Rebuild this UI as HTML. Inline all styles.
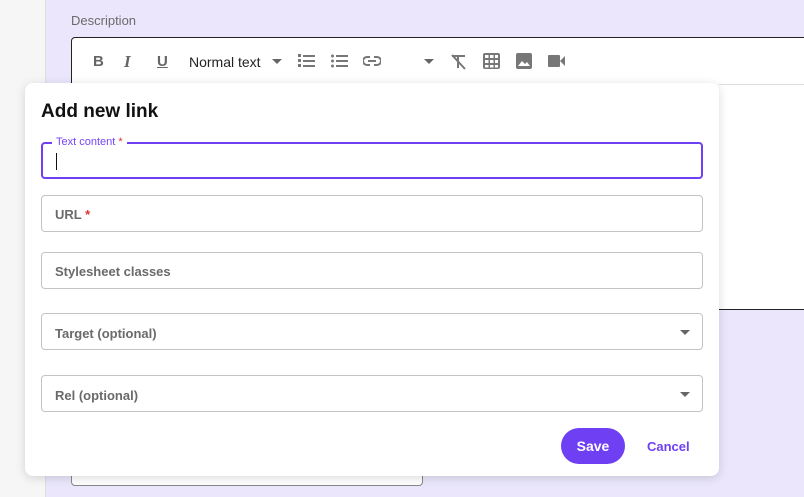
<!DOCTYPE html>
<html><head><style>
*{box-sizing:border-box;margin:0;padding:0}
body{width:804px;height:497px;overflow:hidden;position:relative;background:#ebe6fc;font-family:"Liberation Sans",sans-serif}
.left{position:absolute;left:0;top:0;width:46px;height:497px;background:#f6f6f6;border-right:1px solid #ddd}
.abs{position:absolute}
.editor{left:71px;top:37px;width:760px;height:273px;background:#fff;border:1px solid #222;border-radius:4px}
.tb{position:absolute;top:52px;height:18px;color:#666;font-size:15px;font-weight:bold}
.dialog{left:25px;top:83px;width:694px;height:393px;background:#fff;border-radius:8px;box-shadow:0 2px 10px rgba(0,0,0,.15)}
.f{position:absolute;left:41px;width:662px;height:37px;border:1px solid #c4c4c4;border-radius:4px;color:#6a6a6a;font-size:13px;font-weight:bold;padding:11px 13px}
.caret{position:absolute;right:12px;top:16px;border-left:5px solid transparent;border-right:5px solid transparent;border-top:5px solid #666}
</style></head><body>
<div class="left"></div>
<div class="abs" style="left:71px;top:13px;font-size:13px;color:#6b6b6b">Description</div>
<div class="abs editor"></div>
<div class="abs" style="left:71px;top:440px;width:352px;height:46px;background:#fff;border:1px solid #888;border-radius:4px"></div>
<div class="tb" style="left:93px;top:53px">B</div>
<div class="tb" style="left:124px;font-style:italic;font-family:'Liberation Serif',serif;font-size:17px">I</div>
<div class="tb" style="left:157px;text-decoration:underline;top:53px">U</div>
<div class="tb" style="left:189px;font-weight:normal;font-size:14px;color:#222;top:54px">Normal text</div>
<div class="abs" style="left:272px;top:59px;border-left:5px solid transparent;border-right:5px solid transparent;border-top:5px solid #666"></div>
<svg class="abs" style="left:298px;top:53px" width="18" height="16" fill="#777"><rect x="5" y="2" width="12" height="2"/><rect x="5" y="7" width="12" height="2"/><rect x="5" y="12" width="12" height="2"/><rect x="0" y="1" width="3" height="3"/><rect x="0" y="6" width="3" height="3"/><rect x="0" y="11" width="3" height="3"/></svg>
<svg class="abs" style="left:331px;top:53px" width="18" height="16" fill="#777"><rect x="5" y="2" width="12" height="2"/><rect x="5" y="7" width="12" height="2"/><rect x="5" y="12" width="12" height="2"/><circle cx="1.5" cy="3" r="1.5"/><circle cx="1.5" cy="8" r="1.5"/><circle cx="1.5" cy="13" r="1.5"/></svg>
<svg class="abs" style="left:363px;top:55px" width="18" height="12" fill="none" stroke="#777" stroke-width="2"><path d="M7 2H4a4 4 0 0 0 0 8h3M11 2h3a4 4 0 0 1 0 8h-3M5 6h8"/></svg>
<div class="abs" style="left:424px;top:59px;border-left:5px solid transparent;border-right:5px solid transparent;border-top:5px solid #666"></div>
<svg class="abs" style="left:450px;top:53px" width="17" height="17" stroke="#777" stroke-width="2" fill="none"><path d="M2 3h13M8 3v12M2 2l13 14"/></svg>
<svg class="abs" style="left:483px;top:53px" width="17" height="16" fill="#777"><rect width="17" height="16" rx="2"/><g fill="#fff"><rect x="2" y="2" width="3.5" height="3"/><rect x="7" y="2" width="3.5" height="3"/><rect x="12" y="2" width="3" height="3"/><rect x="2" y="7" width="3.5" height="3"/><rect x="7" y="7" width="3.5" height="3"/><rect x="12" y="7" width="3" height="3"/><rect x="2" y="12" width="3.5" height="2.5"/><rect x="7" y="12" width="3.5" height="2.5"/><rect x="12" y="12" width="3" height="2.5"/></g></svg>
<svg class="abs" style="left:516px;top:53px" width="16" height="16"><rect width="16" height="16" rx="2" fill="#777"/><path d="M2 13l4-5 3 3 2-2 3 4z" fill="#fff"/></svg>
<svg class="abs" style="left:548px;top:55px" width="17" height="12" fill="#777"><rect width="12" height="12" rx="1"/><path d="M12 6l5-5v10z"/></svg>
<div class="abs" style="left:719px;top:84px;width:85px;height:1px;background:#ddd"></div>
<div class="abs dialog"></div>
<div class="abs" style="left:41px;top:101px;font-size:19px;font-weight:bold;color:#111">Add new link</div>
<div class="f" style="top:142px;height:37px;border:2px solid #6e3ff3"><div style="position:absolute;left:9px;top:-8px;background:#fff;padding:0 4px;font-size:11px;font-weight:normal;color:#7446f6">Text content <span style="color:#d33">*</span></div><div style="position:absolute;left:13px;top:9px;width:1px;height:17px;background:#111"></div></div>
<div class="f" style="top:195px">URL <span style="color:#d33">*</span></div>
<div class="f" style="top:252px">Stylesheet classes</div>
<div class="f" style="top:313px;padding-top:12px">Target (optional)<div class="caret"></div></div>
<div class="f" style="top:375px;padding-top:12px">Rel (optional)<div class="caret"></div></div>
<div class="abs" style="left:561px;top:428px;width:64px;height:36px;border-radius:18px;background:#6e3ff3;color:#fff;font-size:14px;font-weight:bold;text-align:center;line-height:36px">Save</div>
<div class="abs" style="left:647px;top:439px;color:#6e3ff3;font-size:13px;font-weight:bold">Cancel</div>
</body></html>
